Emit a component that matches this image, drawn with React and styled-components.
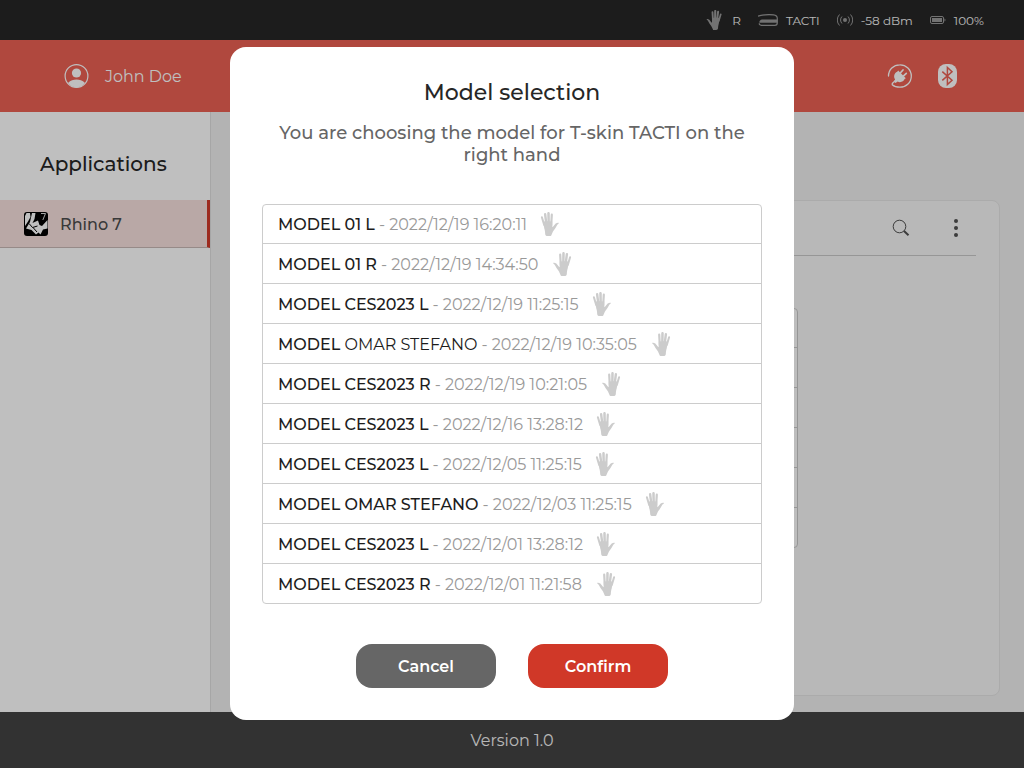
import React from "react";
import styled, { createGlobalStyle } from "styled-components";

const GlobalStyle = createGlobalStyle`
  *, *::before, *::after { box-sizing: border-box; }
  body {
    margin: 0;
    font-family: Montserrat, Inter, "Open Sans", sans-serif;
    font-size: 16px;
    color: #262626;
  }
  h1, h2, p, ul { margin: 0; padding: 0; }
  ul { list-style: none; }
  button { font: inherit; color: inherit; border: 0; background: none; padding: 0; cursor: pointer; }
  svg { display: block; flex: none; }
`;

const Page = styled.div`
  min-height: 100vh;
  display: flex;
  flex-direction: column;
`;

const StatusBar = styled.div`
  height: 40px;
  padding: 0 40px;
  display: flex;
  align-items: center;
  justify-content: flex-end;
  gap: 17px;
  background: #262626;
  color: #f5f5f5;
  font-size: 12px;
`;

const StatusItem = styled.span`
  display: flex;
  align-items: center;
  gap: 8px;
  svg { color: #999; }
`;

const Header = styled.header`
  height: 72px;
  padding: 0 67px 0 64px;
  display: flex;
  align-items: center;
  justify-content: space-between;
  background: #eb6053;
  color: #fff;
`;

const UserButton = styled.button`
  display: flex;
  align-items: center;
  gap: 16px;
  font-size: 16px;
`;

const HeaderActions = styled.div`
  display: flex;
  gap: 25px;
`;

const Main = styled.div`
  flex: 1;
  display: flex;
  background: #efefef;
`;

const Sidebar = styled.nav`
  width: 211px;
  padding-top: 40px;
  background: #fff;
  border-right: 1px solid #dedede;
`;

const SidebarTitle = styled.h2`
  padding: 0 40px;
  margin-bottom: 24px;
  font-size: 20px;
  line-height: 24px;
  font-weight: 500;
`;

const AppLink = styled.a`
  height: 48px;
  padding: 1px 24px 0;
  display: flex;
  align-items: center;
  gap: 12px;
  background: #f7e1de;
  border-right: 3px solid #d23828;
  border-bottom: 1px solid #c8b8b6;
  color: #4c4c4c;
  font-weight: 500;
  text-decoration: none;
`;

const Content = styled.main`
  flex: 1;
  display: flex;
  padding: 88px 24px 16px;
`;

const Card = styled.section`
  flex: 1;
  padding: 0 23px;
  background: #f6f6f6;
  border: 1px solid #e4e4e4;
  border-radius: 8px;
`;

const CardBar = styled.div`
  height: 55px;
  padding: 0 8px;
  display: flex;
  align-items: center;
  justify-content: flex-end;
  gap: 34px;
  border-bottom: 1px solid #c8c8c8;
  color: #505050;
`;

const BackList = styled.ul`
  width: 500px;
  max-width: 100%;
  margin: 52px 0 0 39px;
  background: #fdfdfd;
  border: 1px solid #c8c8c8;
  border-radius: 4px;
`;

const BackRow = styled.li`
  height: 40px;
  & + & { border-top: 1px solid #c8c8c8; }
  &:first-child { height: 38px; }
`;

const Footer = styled.footer`
  height: 56px;
  display: flex;
  align-items: center;
  justify-content: center;
  background: #434343;
  color: #f5f5f5;
`;

const Overlay = styled.div`
  position: fixed;
  inset: 0;
  padding-bottom: 1px;
  display: flex;
  align-items: center;
  justify-content: center;
  background: rgba(0, 0, 0, 0.25);
`;

const Dialog = styled.div`
  width: 564px;
  max-width: 100%;
  padding: 32px;
  background: #fff;
  border-radius: 16px;
`;

const DialogTitle = styled.h1`
  font-size: 22px;
  line-height: 28px;
  font-weight: 500;
  text-align: center;
`;

const DialogText = styled.p`
  margin: 15px 0 38px;
  font-size: 18px;
  line-height: 22px;
  font-weight: 500;
  text-align: center;
  color: #666;
`;

const ModelList = styled.ul`
  border: 1px solid #ccc;
  border-radius: 4px;
`;

const ModelItem = styled.li`
  height: 40px;
  display: flex;
  & + & {
    padding-top: 1px;
    border-top: 1px solid #ccc;
  }
  &:first-child { height: 38px; }
`;

const ModelButton = styled.button`
  width: 100%;
  padding: 0 15px;
  display: flex;
  align-items: center;
  gap: 4px;
  color: #999;
  svg { margin-left: 8px; color: #ccc; }
`;

const ModelName = styled.span`
  color: #1c1c1c;
  font-weight: 500;
`;

const LightName = styled.span`
  font-weight: 400;
`;

const Actions = styled.div`
  margin-top: 40px;
  display: flex;
  justify-content: center;
  gap: 32px;
`;

const ActionButton = styled.button`
  width: 140px;
  height: 44px;
  border-radius: 16px;
  background: ${(p) => (p.$primary ? "#d03828" : "#666")};
  color: #fff;
  font-weight: 600;
`;

function Hand({ side, size = 24 }) {
  return (
    <svg width={size} height={size} viewBox="0 0 24 24" role="img" aria-label={side === "L" ? "left hand" : "right hand"}>
      <g transform={side === "L" ? "translate(.5 0)" : "matrix(-1 0 0 1 22.500 0)"}>
        <g stroke="currentColor" strokeLinecap="round" fill="none">
          <path d="M2.400 5.200L4.700 13" strokeWidth="2" />
          <path d="M5.600 2.200L7 13" strokeWidth="2.400" />
          <path d="M9 1.200L9.200 13" strokeWidth="2.500" />
          <path d="M12.300 2.700L11.700 13" strokeWidth="2.200" />
        </g>
        <path
          fill="currentColor"
          d="M3.600 10L6 9 12.700 9.500 12.900 15.300C14 14.800 15 12.600 16.200 11.600 17.400 10.700 19 10.600 19.400 11.100 19.500 11.600 18.400 12 17.800 12.800 16.500 15 15.500 17 14 18.800 13 20.200 12.600 21.800 11.900 23.200 11.500 24 10.600 24 9.500 24H8C6.500 24 5.900 23.600 5.700 22 5.500 19.500 5.400 18.500 4.800 16.500z"
        />
      </g>
    </svg>
  );
}

function DeviceIcon() {
  return (
    <svg width="20" height="12" viewBox="0 0 20 12" fill="none" stroke="currentColor" strokeWidth="1.200">
      <path d="M0 2.200C4 .9 11 .4 15.500.8c2.600.2 3.800 1.400 3.800 3.700v4.200c0 1.800-.9 2.600-2.500 2.600H3.300C1.800 11.300 1.200 10.400 1.300 9.200" />
      <path fill="currentColor" strokeWidth=".5" d="M4 5.800h15v2.600H1.600C1.600 6.800 2.600 5.800 4 5.800z" />
    </svg>
  );
}

function SignalIcon() {
  return (
    <svg width="16" height="12" viewBox="0 0 16 12" fill="none" stroke="currentColor">
      <circle cx="8" cy="6" r="2" fill="currentColor" stroke="none" />
      <path d="M5 2.500a5 5 0 0 0 0 7M11 2.500a5 5 0 0 1 0 7M2.500.5a8 8 0 0 0 0 11M13.500.5a8 8 0 0 1 0 11" />
    </svg>
  );
}

function BatteryIcon() {
  return (
    <svg width="16" height="8" viewBox="0 0 16 8">
      <rect x=".5" y=".5" width="13" height="7" rx="1.500" fill="none" stroke="currentColor" />
      <path fill="currentColor" d="M2 2h10v4H2zM14.500 2.500c1.300.5 1.300 2.500 0 3z" />
    </svg>
  );
}

function UserIcon() {
  return (
    <svg width="25" height="24" viewBox="0 0 24 24">
      <circle cx="12" cy="12" r="11.400" fill="none" stroke="currentColor" strokeWidth="1.200" />
      <circle cx="12" cy="9" r="4.600" fill="currentColor" />
      <path fill="currentColor" d="M3.500 19C6 16.200 9 15.400 12 15.400s6 .8 8.500 3.600A11.500 11.500 0 0 1 12 23.500 11.500 11.500 0 0 1 3.500 19z" />
    </svg>
  );
}

function PlugIcon() {
  return (
    <svg width="26" height="24" viewBox="0 0 26 24" fill="none" stroke="currentColor" strokeWidth="1.300" strokeLinecap="round">
      <path d="M1.500 12C1.500 5.500 6.500.8 12.800.8A11.200 11.200 0 0 1 24.300 12c0 6.500-5 11.200-11.300 11.200-3.300 0-6-.9-7.800-2.500-.2-1.400.7-2.300 2.700-3.600" />
      <path fill="currentColor" stroke="none" d="M11.200 6.600l7.600 7.600-1.200.9c-.8 2.600-4.400 3.800-6.900 2.500L8.500 19 6.700 17.400l1.400-2C6.200 12.600 7.300 9 10.200 7.700z" />
      <path d="M13.500 8.800L16 6M16.600 11.900l2.700-2.600" strokeWidth="1.700" />
    </svg>
  );
}

function BluetoothIcon() {
  return (
    <svg width="19" height="24" viewBox="0 0 19 24">
      <rect width="19" height="24" rx="8" fill="currentColor" />
      <path d="M4.300 7.600l9.700 8.600-4.600 4.400V3.400L14 7.800 4.300 16.400" fill="none" stroke="#eb6053" strokeWidth="1.500" />
    </svg>
  );
}

function RhinoIcon() {
  return (
    <svg width="24" height="24" viewBox="0 0 24 24">
      <rect width="24" height="24" rx="3" fill="#000" />
      <path fill="#fff" d="M2.500 1H6L6.500 5 4 9.500 1 14V4zM8 1h3.500L10.500 7 8.500 11 14 8.500 15.500 13 18 14l5.500-6v8.500L19 17.500 16.500 22.500 14.500 20.500 12 22.500 7.500 18 2 16.500 6 10z" />
      <path fill="none" stroke="#000" d="M5 11.500l3.500 4 5-1.500M9 15.500l4 4.500" />
      <path fill="none" stroke="#ddd" d="M17 1.500h4.500L18.800 8" />
    </svg>
  );
}

function SearchIcon() {
  return (
    <svg width="18" height="18" viewBox="0 0 18 18" fill="none" stroke="currentColor">
      <circle cx="7.500" cy="7.500" r="6.300" />
      <path d="M12 12l4.500 4.200" strokeWidth="2" />
    </svg>
  );
}

function DotsIcon() {
  return (
    <svg width="24" height="18" viewBox="0 0 24 18" fill="currentColor">
      <circle cx="12" cy="2" r="2" />
      <circle cx="12" cy="9" r="2" />
      <circle cx="12" cy="16" r="2" />
    </svg>
  );
}

const models = [
  { name: "01 L", date: "2022/12/19 16:20:11", side: "L" },
  { name: "01 R", date: "2022/12/19 14:34:50", side: "R" },
  { name: "CES2023 L", date: "2022/12/19 11:25:15", side: "L" },
  { name: "OMAR STEFANO", date: "2022/12/19 10:35:05", side: "R", light: true },
  { name: "CES2023 R", date: "2022/12/19 10:21:05", side: "R" },
  { name: "CES2023 L", date: "2022/12/16 13:28:12", side: "L" },
  { name: "CES2023 L", date: "2022/12/05 11:25:15", side: "L" },
  { name: "OMAR STEFANO", date: "2022/12/03 11:25:15", side: "L" },
  { name: "CES2023 L", date: "2022/12/01 13:28:12", side: "L" },
  { name: "CES2023 R", date: "2022/12/01 11:21:58", side: "R" },
];

export default function App() {
  return (
    <>
      <GlobalStyle />
      <Page>
        <StatusBar>
          <StatusItem><Hand side="R" size={20} />R</StatusItem>
          <StatusItem><DeviceIcon />TACTI</StatusItem>
          <StatusItem><SignalIcon />-58 dBm</StatusItem>
          <StatusItem><BatteryIcon />100%</StatusItem>
        </StatusBar>
        <Header>
          <UserButton type="button"><UserIcon />John Doe</UserButton>
          <HeaderActions>
            <button type="button" aria-label="Power"><PlugIcon /></button>
            <button type="button" aria-label="Bluetooth"><BluetoothIcon /></button>
          </HeaderActions>
        </Header>
        <Main>
          <Sidebar>
            <SidebarTitle>Applications</SidebarTitle>
            <AppLink href="#rhino"><RhinoIcon />Rhino 7</AppLink>
          </Sidebar>
          <Content>
            <Card>
              <CardBar>
                <button type="button" aria-label="Search"><SearchIcon /></button>
                <button type="button" aria-label="More"><DotsIcon /></button>
              </CardBar>
              <BackList>
                {[1, 2, 3, 4, 5, 6].map((n) => <BackRow key={n} />)}
              </BackList>
            </Card>
          </Content>
        </Main>
        <Footer>Version 1.0</Footer>
      </Page>
      <Overlay>
        <Dialog role="dialog" aria-modal="true" aria-labelledby="dialog-title">
          <DialogTitle id="dialog-title">Model selection</DialogTitle>
          <DialogText>You are choosing the model for T-skin TACTI on the right hand</DialogText>
          <ModelList>
            {models.map((m) => (
              <ModelItem key={m.name + m.date}>
                <ModelButton type="button">
                  <ModelName>MODEL {m.light ? <LightName>{m.name}</LightName> : m.name}</ModelName>
                  <span>- {m.date}</span>
                  <Hand side={m.side} />
                </ModelButton>
              </ModelItem>
            ))}
          </ModelList>
          <Actions>
            <ActionButton type="button">Cancel</ActionButton>
            <ActionButton type="button" $primary>Confirm</ActionButton>
          </Actions>
        </Dialog>
      </Overlay>
    </>
  );
}
